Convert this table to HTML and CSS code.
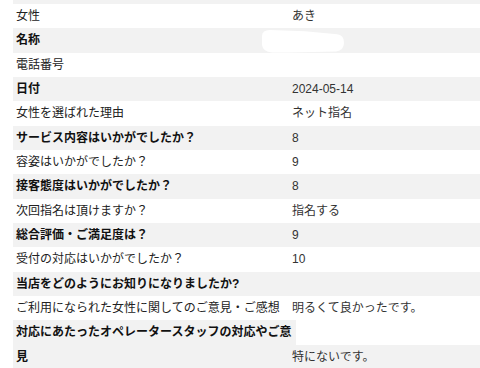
FILE: index.html
```html
<!DOCTYPE html>
<html lang="ja">
<head>
<meta charset="utf-8">
<title>アンケート</title>
<link rel="stylesheet" href="styles.css">
</head>
<body>
<div class="sheet">
  <div class="row alt stub"></div>
  <div class="row"><div class="label">女性</div><div class="value">あき</div></div>
  <div class="row alt redacted"><div class="label">名称</div><div class="value"></div>
    <svg class="blot" width="100" height="26" viewBox="0 0 100 26" aria-hidden="true"><path d="M3,8 Q3,2 11,2 L46,3.2 L78,6.2 Q85,7 85,14.5 Q85,22.5 77,23.5 L31,24.5 L13,24.5 Q4,24 3,17 Z" fill="#fff"/></svg>
  </div>
  <div class="row"><div class="label">電話番号</div><div class="value"></div></div>
  <div class="row alt"><div class="label">日付</div><div class="value">2024-05-14</div></div>
  <div class="row"><div class="label">女性を選ばれた理由</div><div class="value">ネット指名</div></div>
  <div class="row alt"><div class="label">サービス内容はいかがでしたか？</div><div class="value">8</div></div>
  <div class="row"><div class="label">容姿はいかがでしたか？</div><div class="value">9</div></div>
  <div class="row alt"><div class="label">接客態度はいかがでしたか？</div><div class="value">8</div></div>
  <div class="row"><div class="label">次回指名は頂けますか？</div><div class="value">指名する</div></div>
  <div class="row alt"><div class="label">総合評価・ご満足度は？</div><div class="value">9</div></div>
  <div class="row"><div class="label">受付の対応はいかがでしたか？</div><div class="value">10</div></div>
  <div class="row alt"><div class="label">当店をどのようにお知りになりましたか?</div><div class="value"></div></div>
  <div class="row"><div class="label">ご利用になられた女性に関してのご意見・ご感想</div><div class="value">明るくて良かったです。</div></div>
  <div class="row alt long"><div class="label">対応にあたったオペレータースタッフの対応やご意見</div><div class="value">特にないです。</div></div>
</div>
</body>
</html>
```
FILE: styles.css
```css
html, body {
  margin: 0;
  padding: 0;
  background: #fff;
}

body {
  font-family: "Liberation Sans", "Noto Sans CJK JP", sans-serif;
  font-size: 12px;
  color: #222;
  overflow: hidden;
}

.sheet {
  margin-left: 13px;
}

.row {
  display: grid;
  grid-template-columns: 276px 1fr;
  line-height: 24.33px;
}

.row.alt {
  background: #f2f2f2;
}

.row.alt .label {
  font-weight: 700;
  color: #111;
}

.label,
.value {
  padding: 0 3px;
}

.value {
  color: #333;
}

.stub {
  height: 4px;
}

.redacted {
  position: relative;
}

.blot {
  position: absolute;
  left: 246px;
  top: 0;
  overflow: visible;
}

.row.long {
  background: transparent;
  grid-template-rows: 1fr 1fr;
}

.row.long .label {
  grid-column: 1 / -1;
  grid-row: 1 / span 2;
  justify-self: start;
  max-width: 283px;
  box-sizing: border-box;
  background: #f2f2f2;
}

.row.long .value {
  grid-column: 2;
  grid-row: 2;
  background: #f2f2f2;
}
```
